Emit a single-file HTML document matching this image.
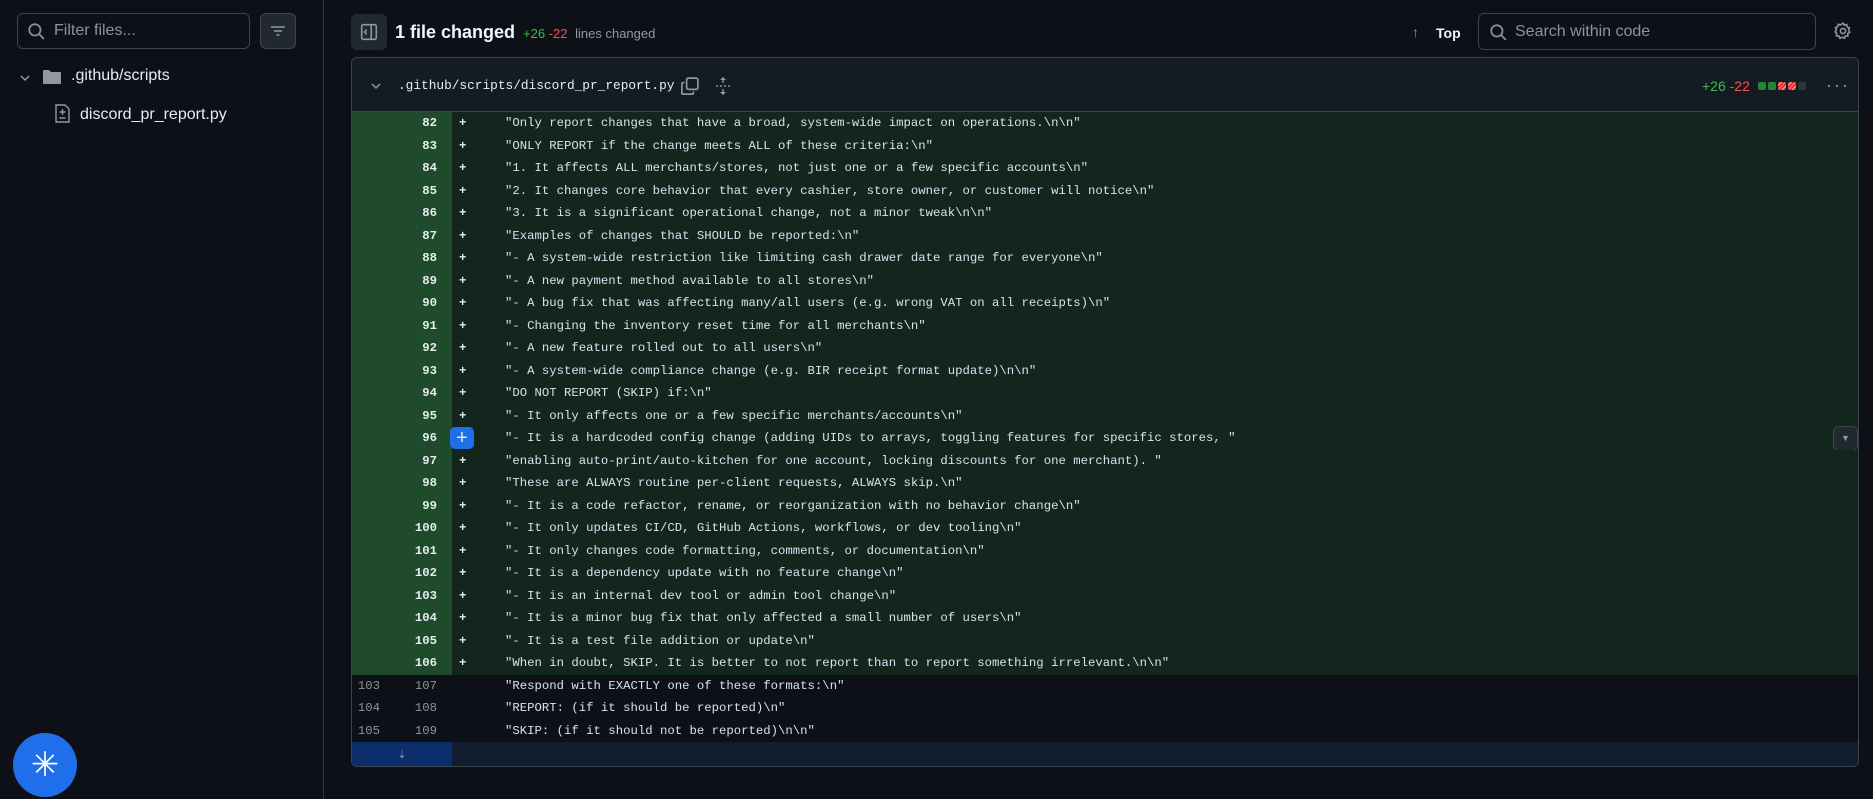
<!DOCTYPE html>
<html><head><meta charset="utf-8"><style>
*{box-sizing:border-box;margin:0;padding:0}
body{width:1873px;height:799px;background:#0d1117;color:#e6edf3;font-family:"Liberation Sans",sans-serif;position:relative;overflow:hidden}
.abs{position:absolute}
.side{left:0;top:0;width:324px;height:799px;border-right:1px solid #30363d}
.filter{left:17px;top:13px;width:233px;height:36px;border:1px solid #3d444d;border-radius:6px;color:#8b949e;font-size:16px;line-height:34px;padding-left:36px}
.fbtn{left:260px;top:13px;width:36px;height:36px;border:1px solid #3d444d;border-radius:6px;background:#212830}
.diff{left:351px;top:57px;width:1508px;height:710px;border:1px solid #3d444d;border-radius:6px;overflow:hidden;background:#0d1117}
.hdr{height:54px;background:#151b23;border-bottom:1px solid #3d444d;position:relative}
.row{height:22.5px;position:relative;font-family:"Liberation Mono",monospace;font-size:12.3px;line-height:22.5px;white-space:pre}
.row.a{background:#12261e}
.row .n1,.row .n2{position:absolute;top:0;width:50px;height:100%;text-align:right;padding-right:15px;color:#8b949e}
.row .n1{left:0;padding-right:22px}.row .n2{left:50px}
.row.a .n1,.row.a .n2{background:#1f4a2b;color:#e6edf3}
.row.a .n2{font-weight:bold}
.row .s{position:absolute;left:107px;color:#e6edf3;font-weight:bold}
.row .c{position:absolute;left:153px;color:#d6e2ee}
</style></head><body>
<div class="abs side"></div>
<div class="abs filter">Filter files...</div>
<svg class="abs" style="left:27px;top:22px" width="18" height="18" viewBox="0 0 16 16" fill="none" stroke="#8b949e" stroke-width="1.5"><circle cx="7" cy="7" r="5"/><path d="M11 11l4 4"/></svg>
<div class="abs fbtn"></div>
<svg class="abs" style="left:270px;top:23px" width="16" height="16" viewBox="0 0 16 16" stroke="#9198a1" stroke-width="1.5"><path d="M1 4h14M4 8h8M6.5 12h3"/></svg>
<svg class="abs" style="left:19px;top:72px" width="12" height="12" viewBox="0 0 12 12" fill="none" stroke="#9198a1" stroke-width="1.5"><path d="M2 4l4 4 4-4"/></svg>
<svg class="abs" style="left:43px;top:69px" width="18" height="16" viewBox="0 0 18 16"><path d="M0 2a1 1 0 011-1h5l2 2h9a1 1 0 011 1v10a1 1 0 01-1 1H1a1 1 0 01-1-1z" fill="#9198a1"/></svg>
<div class="abs" style="left:71px;top:67px;font-size:16px;color:#e6edf3">.github/scripts</div>
<svg class="abs" style="left:55px;top:104px" width="15" height="19" viewBox="0 0 15 19" fill="none" stroke="#9198a1" stroke-width="1.4"><path d="M1 1h9l4 4v13H1z M7.5 5v6M4.5 8h6M4.5 14h6"/></svg>
<div class="abs" style="left:80px;top:106px;font-size:16px;color:#e6edf3">discord_pr_report.py</div>
<div class="abs" style="left:13px;top:733px;width:64px;height:64px;border-radius:50%;background:#1f6feb;color:#fff;font-size:34px;text-align:center;line-height:64px">✳</div>

<div class="abs" style="left:351px;top:14px;width:36px;height:36px;border-radius:6px;background:#212830"></div>
<svg class="abs" style="left:360px;top:23px" width="18" height="18" viewBox="0 0 16 16" fill="none" stroke="#9198a1" stroke-width="1.4"><rect x="1.5" y="1.5" width="13" height="13" rx="1.5"/><path d="M10 1.5v13M6 6l-2 2 2 2"/></svg>
<div class="abs" style="left:395px;top:22px;font-size:18px;font-weight:bold;color:#f0f6fc">1 file changed</div>
<div class="abs" style="left:523px;top:26px;font-size:13px"><span style="color:#3fb950">+26</span> <span style="color:#f85149">-22</span> <span style="color:#9198a1;margin-left:4px">lines changed</span></div>
<div class="abs" style="left:1412px;top:24px;font-size:14px;color:#9198a1">↑</div>
<div class="abs" style="left:1436px;top:25px;font-size:14px;font-weight:bold;color:#f0f6fc">Top</div>
<div class="abs" style="left:1478px;top:13px;width:338px;height:37px;border:1px solid #3d444d;border-radius:6px;color:#8b949e;font-size:16px;line-height:35px;padding-left:36px">Search within code</div>
<svg class="abs" style="left:1489px;top:23px" width="18" height="18" viewBox="0 0 16 16" fill="none" stroke="#8b949e" stroke-width="1.5"><circle cx="7" cy="7" r="5"/><path d="M11 11l4 4"/></svg>
<svg class="abs" style="left:1834px;top:22px" width="18" height="18" viewBox="0 0 16 16" fill="none" stroke="#9198a1" stroke-width="1.4"><circle cx="8" cy="8" r="2.3"/><path d="M8 1l1.2 1.8 2.1-.6.4 2.1 2 .9-.9 2 1.2 1.8-1.8 1.2.2 2.2-2.2.1-.9 2-2-1-2 1-.9-2-2.2-.1.2-2.2L1 8.8l1.2-1.8-.9-2 2-.9.4-2.1 2.1.6z"/></svg>

<div class="abs diff">
<div class="hdr">
<svg class="abs" style="left:18px;top:22px" width="12" height="12" viewBox="0 0 12 12" fill="none" stroke="#9198a1" stroke-width="1.5"><path d="M2 4l4 4 4-4"/></svg>
<div class="abs" style="left:46px;top:20px;font-family:'Liberation Mono',monospace;font-size:12.8px;color:#e6edf3">.github/scripts/discord_pr_report.py</div>
<svg class="abs" style="left:329px;top:19px" width="18" height="18" viewBox="0 0 16 16" fill="none" stroke="#9198a1" stroke-width="1.5"><rect x="5" y="1" width="10" height="10" rx="1.5"/><path d="M3 5H1.8a1 1 0 00-1 1v8.2a1 1 0 001 1H10a1 1 0 001-1V13"/></svg>
<svg class="abs" style="left:363px;top:18px" width="16" height="20" viewBox="0 0 16 20" fill="#9198a1"><path d="M8 1l3 3H5zM8 19l3-3H5z"/><rect x="7.3" y="3" width="1.4" height="4"/><rect x="7.3" y="13" width="1.4" height="4"/><rect x="1" y="9.3" width="2" height="1.4"/><rect x="5" y="9.3" width="2" height="1.4"/><rect x="9" y="9.3" width="2" height="1.4"/><rect x="13" y="9.3" width="2" height="1.4"/></svg>
<div class="abs" style="left:1350px;top:20px;font-size:14px"><span style="color:#3fb950">+26</span> <span style="color:#f85149">-22</span></div>
<div class="abs" style="left:1406px;top:24px;display:flex;gap:2px"><i style="width:8px;height:8px;background:#238636;border-radius:2px"></i><i style="width:8px;height:8px;background:#238636;border-radius:2px"></i><i style="width:8px;height:8px;background:repeating-linear-gradient(135deg,#da3633 0 2px,#f3a6a4 2px 3px);border-radius:2px"></i><i style="width:8px;height:8px;background:repeating-linear-gradient(135deg,#da3633 0 2px,#f3a6a4 2px 3px);border-radius:2px"></i><i style="width:8px;height:8px;background:#2f353d;border-radius:2px"></i></div>
<div class="abs" style="left:1474px;top:17px;font-size:18px;color:#9198a1;letter-spacing:2px">···</div>
</div>
<div class="row a"><span class="n1"></span><span class="n2">82</span><span class="s">+</span><span class="c">"Only report changes that have a broad, system-wide impact on operations.\n\n"</span></div>
<div class="row a"><span class="n1"></span><span class="n2">83</span><span class="s">+</span><span class="c">"ONLY REPORT if the change meets ALL of these criteria:\n"</span></div>
<div class="row a"><span class="n1"></span><span class="n2">84</span><span class="s">+</span><span class="c">"1. It affects ALL merchants/stores, not just one or a few specific accounts\n"</span></div>
<div class="row a"><span class="n1"></span><span class="n2">85</span><span class="s">+</span><span class="c">"2. It changes core behavior that every cashier, store owner, or customer will notice\n"</span></div>
<div class="row a"><span class="n1"></span><span class="n2">86</span><span class="s">+</span><span class="c">"3. It is a significant operational change, not a minor tweak\n\n"</span></div>
<div class="row a"><span class="n1"></span><span class="n2">87</span><span class="s">+</span><span class="c">"Examples of changes that SHOULD be reported:\n"</span></div>
<div class="row a"><span class="n1"></span><span class="n2">88</span><span class="s">+</span><span class="c">"- A system-wide restriction like limiting cash drawer date range for everyone\n"</span></div>
<div class="row a"><span class="n1"></span><span class="n2">89</span><span class="s">+</span><span class="c">"- A new payment method available to all stores\n"</span></div>
<div class="row a"><span class="n1"></span><span class="n2">90</span><span class="s">+</span><span class="c">"- A bug fix that was affecting many/all users (e.g. wrong VAT on all receipts)\n"</span></div>
<div class="row a"><span class="n1"></span><span class="n2">91</span><span class="s">+</span><span class="c">"- Changing the inventory reset time for all merchants\n"</span></div>
<div class="row a"><span class="n1"></span><span class="n2">92</span><span class="s">+</span><span class="c">"- A new feature rolled out to all users\n"</span></div>
<div class="row a"><span class="n1"></span><span class="n2">93</span><span class="s">+</span><span class="c">"- A system-wide compliance change (e.g. BIR receipt format update)\n\n"</span></div>
<div class="row a"><span class="n1"></span><span class="n2">94</span><span class="s">+</span><span class="c">"DO NOT REPORT (SKIP) if:\n"</span></div>
<div class="row a"><span class="n1"></span><span class="n2">95</span><span class="s">+</span><span class="c">"- It only affects one or a few specific merchants/accounts\n"</span></div>
<div class="row a"><span class="n1"></span><span class="n2">96</span><span class="s" style="left:98px;top:0;width:24px;height:22px;background:#1f6feb;border-radius:5px;text-align:center;font-weight:normal;font-size:20px;font-family:'Liberation Sans',sans-serif;line-height:22px">+</span><span class="c">"- It is a hardcoded config change (adding UIDs to arrays, toggling features for specific stores, "</span><span class="abs" style="left:1481px;top:-1px;width:25px;height:25px;border:1px solid #3d444d;border-radius:6px;background:#212830;color:#9198a1;font-size:9px;text-align:center;line-height:23px;font-family:'Liberation Sans',sans-serif">▼</span></div>
<div class="row a"><span class="n1"></span><span class="n2">97</span><span class="s">+</span><span class="c">"enabling auto-print/auto-kitchen for one account, locking discounts for one merchant). "</span></div>
<div class="row a"><span class="n1"></span><span class="n2">98</span><span class="s">+</span><span class="c">"These are ALWAYS routine per-client requests, ALWAYS skip.\n"</span></div>
<div class="row a"><span class="n1"></span><span class="n2">99</span><span class="s">+</span><span class="c">"- It is a code refactor, rename, or reorganization with no behavior change\n"</span></div>
<div class="row a"><span class="n1"></span><span class="n2">100</span><span class="s">+</span><span class="c">"- It only updates CI/CD, GitHub Actions, workflows, or dev tooling\n"</span></div>
<div class="row a"><span class="n1"></span><span class="n2">101</span><span class="s">+</span><span class="c">"- It only changes code formatting, comments, or documentation\n"</span></div>
<div class="row a"><span class="n1"></span><span class="n2">102</span><span class="s">+</span><span class="c">"- It is a dependency update with no feature change\n"</span></div>
<div class="row a"><span class="n1"></span><span class="n2">103</span><span class="s">+</span><span class="c">"- It is an internal dev tool or admin tool change\n"</span></div>
<div class="row a"><span class="n1"></span><span class="n2">104</span><span class="s">+</span><span class="c">"- It is a minor bug fix that only affected a small number of users\n"</span></div>
<div class="row a"><span class="n1"></span><span class="n2">105</span><span class="s">+</span><span class="c">"- It is a test file addition or update\n"</span></div>
<div class="row a"><span class="n1"></span><span class="n2">106</span><span class="s">+</span><span class="c">"When in doubt, SKIP. It is better to not report than to report something irrelevant.\n\n"</span></div>
<div class="row"><span class="n1">103</span><span class="n2">107</span><span class="c">"Respond with EXACTLY one of these formats:\n"</span></div>
<div class="row"><span class="n1">104</span><span class="n2">108</span><span class="c">"REPORT: (if it should be reported)\n"</span></div>
<div class="row"><span class="n1">105</span><span class="n2">109</span><span class="c">"SKIP: (if it should not be reported)\n\n"</span></div>
<div style="height:28px;background:#121d2f;position:relative"><div style="position:absolute;left:0;top:0;width:100px;height:100%;background:#0c2d6b;color:#9198a1;text-align:center;font-size:11px;line-height:26px">⇣</div></div>
</div>
</body></html>
